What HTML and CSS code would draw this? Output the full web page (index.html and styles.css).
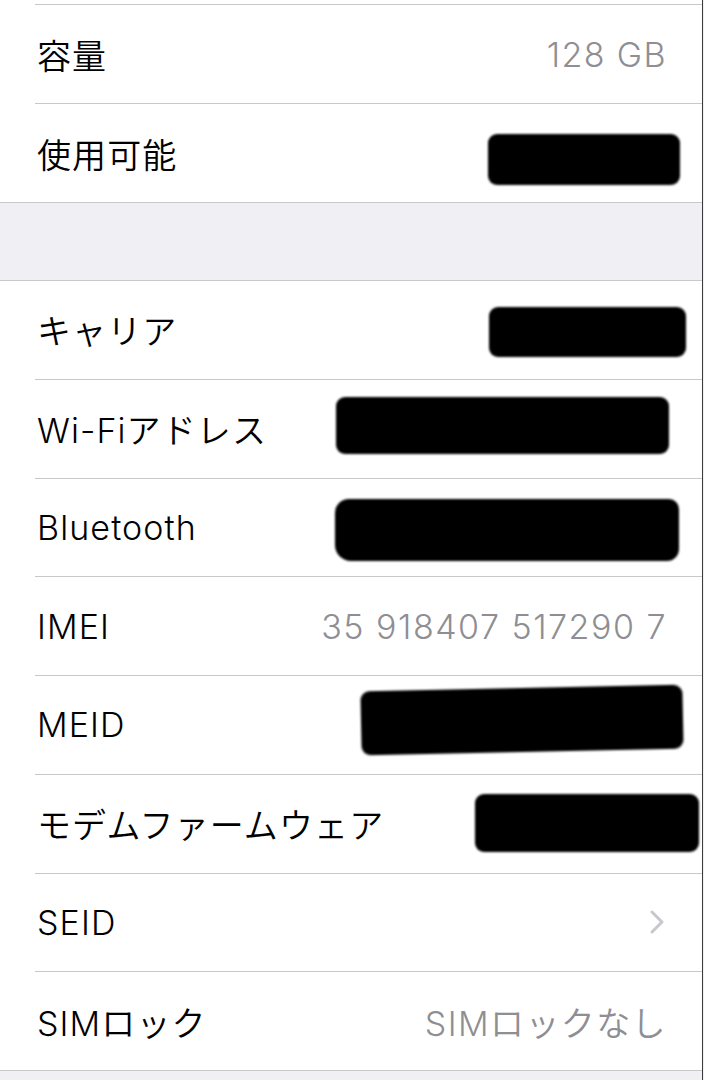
FILE: index.html
```html
<!DOCTYPE html>
<html lang="ja">
<head>
<meta charset="utf-8">
<title>情報</title>
<link rel="stylesheet" href="styles.css">
</head>
<body>
<div class="screen">
  <div class="group group-top">
    <div class="stub"></div>
    <div class="row">
      <span class="label">容量</span>
      <span class="value">128 GB</span>
    </div>
    <div class="row">
      <span class="label">使用可能</span>
      <span class="redact r-avail"></span>
    </div>
  </div>
  <div class="spacer"></div>
  <div class="group group-main">
    <div class="row">
      <span class="label">キャリア</span>
      <span class="redact r-carrier"></span>
    </div>
    <div class="row">
      <span class="label">Wi-Fiアドレス</span>
      <span class="redact r-wifi"></span>
    </div>
    <div class="row">
      <span class="label">Bluetooth</span>
      <span class="redact r-bt"></span>
    </div>
    <div class="row">
      <span class="label">IMEI</span>
      <span class="value num">35 918407 517290 7</span>
    </div>
    <div class="row">
      <span class="label">MEID</span>
      <span class="redact r-meid"></span>
    </div>
    <div class="row">
      <span class="label">モデムファームウェア</span>
      <span class="redact r-modem"></span>
    </div>
    <div class="row">
      <span class="label">SEID</span>
      <svg class="chevron" width="16" height="26" viewBox="0 0 16 26" aria-hidden="true"><polyline points="3,3 13,13 3,23" fill="none" stroke="#c7c7cc" stroke-width="3" stroke-linecap="round" stroke-linejoin="round"/></svg>
    </div>
    <div class="row">
      <span class="label">SIMロック</span>
      <span class="value">SIMロックなし</span>
    </div>
  </div>
</div>
</body>
</html>
```
FILE: styles.css
```css
html, body {
  margin: 0;
  padding: 0;
  background: #efeff4;
}
body {
  font-family: Inter, "Noto Sans CJK JP", sans-serif;
  font-weight: 350;
  -webkit-font-smoothing: antialiased;
}
.screen {
  width: 702px;
  height: 1080px;
  border-right: 1px solid #3c3c3c;
  background: #efeff4;
  overflow: hidden;
}
.group {
  background: #fff;
  padding-left: 35px;
  border-bottom: 1px solid #c8c7cc;
}
.group-main {
  border-top: 1px solid #c8c7cc;
}
.stub {
  height: 4px;
}
.row {
  position: relative;
  height: 98px;
  display: flex;
  align-items: center;
  justify-content: space-between;
  padding-right: 36px;
  border-top: 1px solid #c8c7cc;
}
.group-main .row {
  height: 97.75px;
}
.group-main .row:first-child {
  border-top: none;
}
.label {
  font-size: 34px;
  color: #000;
  padding-left: 2px;
  letter-spacing: 1.1px;
}
.value {
  font-size: 34px;
  color: #8e8e93;
  letter-spacing: 1.4px;
  margin-right: -1px;
}
.num {
  letter-spacing: 1.5px;
}
.spacer {
  height: 77px;
}
.chevron {
  margin-right: 1px;
}
.redact {
  position: absolute;
  background: #000;
  border-radius: 9px;
  filter: blur(1.3px);
}
.r-avail { left: 453px; width: 192px; height: 51px; top: 30px; }
.r-carrier { left: 454px; width: 197px; height: 50px; top: 26px; }
.r-wifi { left: 301px; width: 333px; height: 57px; top: 17px; }
.r-bt { left: 300px; width: 344px; height: 62px; top: 20px; border-radius: 14px 10px 12px 16px; }
.r-meid { left: 326px; width: 322px; height: 64px; top: 12px; transform: rotate(-1.2deg); }
.r-modem { left: 440px; width: 224px; height: 58px; top: 19px; }
```
